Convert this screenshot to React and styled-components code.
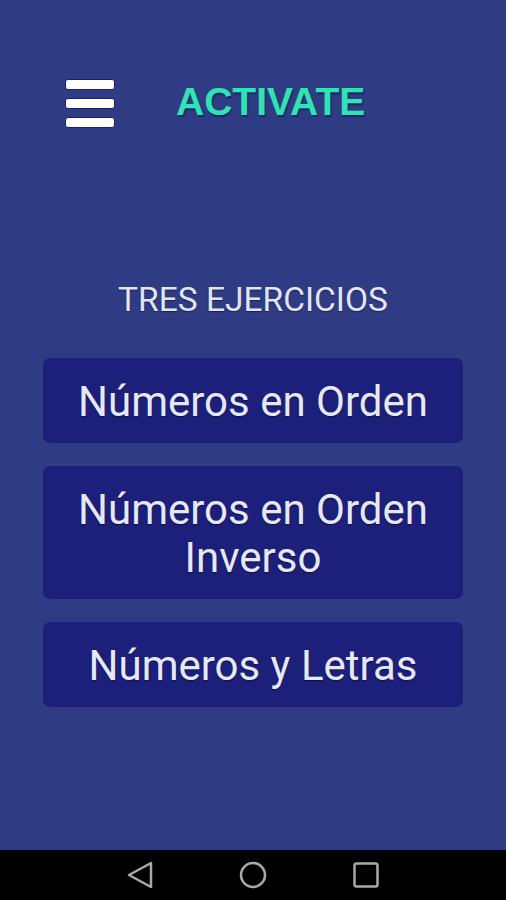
import React from 'react'
import styled, { createGlobalStyle } from 'styled-components'

const Global = createGlobalStyle`
  html, body {
    margin: 0;
    padding: 0;
    background: #2f3b82;
  }
  #root {
    height: 900px;
  }
`

const Screen = styled.div`
  display: flex;
  flex-direction: column;
  height: 900px;
  width: 506px;
  background: #2f3b82;
  font-family: Roboto, "Liberation Sans", sans-serif;
`

const Main = styled.div`
  flex: 1;
  display: flex;
  flex-direction: column;
`

const Header = styled.div`
  display: flex;
  align-items: center;
  padding: 79px 0 0 65px;
  gap: 61px;
`

const Burger = styled.div`
  display: flex;
  flex-direction: column;
  gap: 8px;
  width: 50px;
`

const Bar = styled.div`
  height: 9px;
  background: #ffffff;
  border: 1px solid #1a1f6e;
  border-radius: 3px;
`

const Brand = styled.div`
  font-family: "Liberation Sans", Arial, sans-serif;
  font-weight: bold;
  font-size: 39px;
  line-height: 45px;
  color: #2fe3b4;
  text-shadow: 1px 2px 1px #1c2468;
  margin-top: -4px;
`

const Title = styled.div`
  margin-top: 152px;
  text-align: center;
  font-size: 33.5px;
  line-height: 40px;
  color: #e2e5f3;
  text-shadow: 0 1px 1px rgba(10, 14, 60, 0.6);
`

const List = styled.div`
  display: flex;
  flex-direction: column;
  gap: 23px;
  margin: 38px 43px 0;
`

const Option = styled.div`
  background: #1c207a;
  border-radius: 7px;
  padding: 19.5px 8px 17.5px;
  text-align: center;
  font-size: 42px;
  line-height: 48px;
  color: #e6e8f5;
  text-shadow: 0 1px 1px rgba(5, 8, 50, 0.7);
`

const NavBar = styled.div`
  height: 50px;
  background: #000;
  display: flex;
  align-items: center;
  justify-content: center;
  gap: 83px;
`

const NavIcon = styled.svg`
  width: 30px;
  height: 30px;
  fill: none;
  stroke: #a9a9a9;
  stroke-width: 2.5;
  stroke-linejoin: round;
`

export default function App() {
  return (
    <Screen>
      <Global />
      <Main>
        <Header>
          <Burger>
            <Bar />
            <Bar />
            <Bar />
          </Burger>
          <Brand>ACTIVATE</Brand>
        </Header>
        <Title>TRES EJERCICIOS</Title>
        <List>
          <Option>Números en Orden</Option>
          <Option>Números en Orden<br />Inverso</Option>
          <Option>Números y Letras</Option>
        </List>
      </Main>
      <NavBar>
        <NavIcon viewBox="0 0 30 30">
          <path d="M26 3 L4 15 L26 27 Z" />
        </NavIcon>
        <NavIcon viewBox="0 0 30 30">
          <circle cx="15" cy="15" r="12" />
        </NavIcon>
        <NavIcon viewBox="0 0 30 30">
          <rect x="3.5" y="3.5" width="23" height="23" rx="2" />
        </NavIcon>
      </NavBar>
    </Screen>
  )
}
